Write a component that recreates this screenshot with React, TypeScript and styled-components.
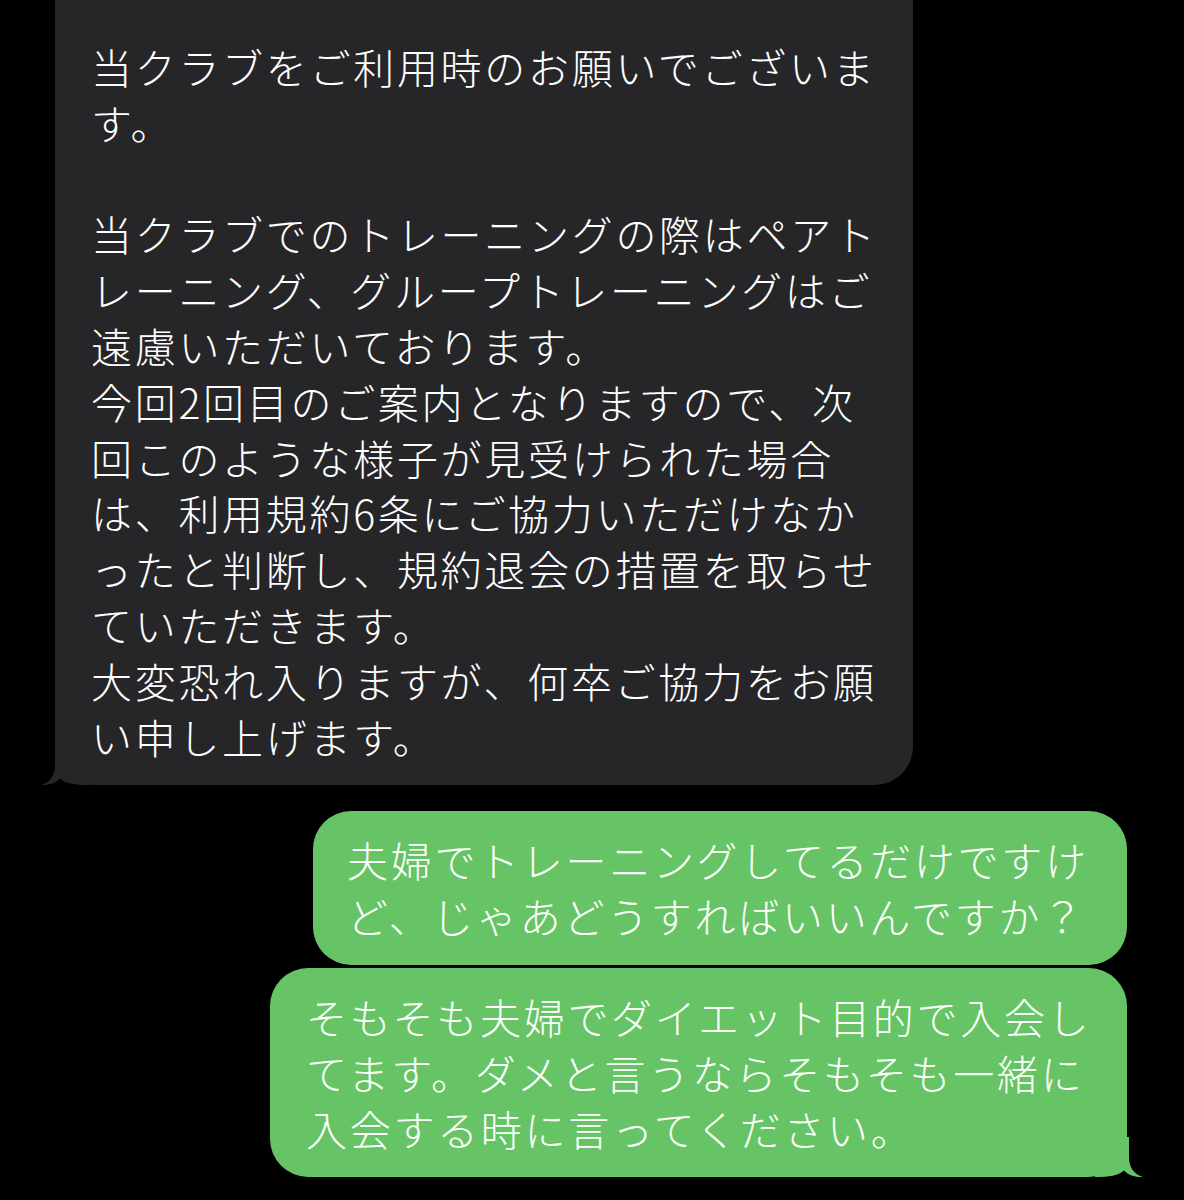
import React from "react";
import styled, { createGlobalStyle } from "styled-components";

const Global = createGlobalStyle`
  html, body {
    margin: 0;
    padding: 0;
    background: #000;
  }
  body {
    font-family: "Noto Sans CJK JP", "Noto Sans", sans-serif;
  }
`;

const Screen = styled.div`
  width: 1184px;
  height: 1200px;
  overflow: hidden;
  background: #000;
`;

const Thread = styled.div`
  display: flex;
  flex-direction: column;
  padding: 0 57px 0 55px;
`;

const Bubble = styled.div<{
  $out?: boolean;
  $w: number;
  $gap?: number;
  $flatTop?: boolean;
  $padL: number;
}>`
  position: relative;
  box-sizing: border-box;
  width: ${(p) => p.$w}px;
  align-self: ${(p) => (p.$out ? "flex-end" : "flex-start")};
  margin-top: ${(p) => p.$gap ?? 0}px;
  padding: ${(p) => (p.$flatTop ? 39 : 21)}px 0 21px ${(p) => p.$padL}px;
  background: ${(p) => (p.$out ? "#66c466" : "#262629")};
  color: ${(p) => (p.$out ? "#fbfff9" : "#ffffff")};
  border-radius: ${(p) => (p.$flatTop ? "0 0 38px 38px" : "38px")};
  font-size: 41px;
  font-weight: 300;
  line-height: 55.8px;
  letter-spacing: 2.7px;
  white-space: nowrap;
`;

const Tail = styled.svg<{ $out?: boolean }>`
  position: absolute;
  bottom: 0;
  width: 50px;
  height: 40px;
  ${(p) => (p.$out ? "right: -16px; transform: scaleX(-1);" : "left: -14px;")}
`;

const BubbleTail = ({ out, color }: { out?: boolean; color: string }) => (
  <Tail $out={out} viewBox="0 0 50 40" aria-hidden>
    <path
      d="M14 0 L14 20 C14 31 9 37 0 40 C8 40.5 15 38 19 33.5 C25 38.5 33 40 48 40 L48 0 Z"
      fill={color}
    />
  </Tail>
);

const Line = styled.span`
  display: block;
  min-height: 55.8px;
`;

const lines = (arr: string[]) => arr.map((t, i) => <Line key={i}>{t}</Line>);

export default function App() {
  return (
    <Screen>
      <Global />
      <Thread>
        <Bubble $w={858} $flatTop $padL={36}>
          {lines([
            "当クラブをご利用時のお願いでございま",
            "す。",
            "",
            "当クラブでのトレーニングの際はペアト",
            "レーニング、グループトレーニングはご",
            "遠慮いただいております。",
            "今回2回目のご案内となりますので、次",
            "回このような様子が見受けられた場合",
            "は、利用規約6条にご協力いただけなか",
            "ったと判断し、規約退会の措置を取らせ",
            "ていただきます。",
            "大変恐れ入りますが、何卒ご協力をお願",
            "い申し上げます。",
          ])}
          <BubbleTail color="#262629" />
        </Bubble>
        <Bubble $out $w={814} $gap={26} $padL={34}>
          {lines(["夫婦でトレーニングしてるだけですけ", "ど、じゃあどうすればいいんですか？"])}
        </Bubble>
        <Bubble $out $w={857} $gap={3} $padL={36}>
          {lines([
            "そもそも夫婦でダイエット目的で入会し",
            "てます。ダメと言うならそもそも一緒に",
            "入会する時に言ってください。",
          ])}
          <BubbleTail out color="#66c466" />
        </Bubble>
      </Thread>
    </Screen>
  );
}
